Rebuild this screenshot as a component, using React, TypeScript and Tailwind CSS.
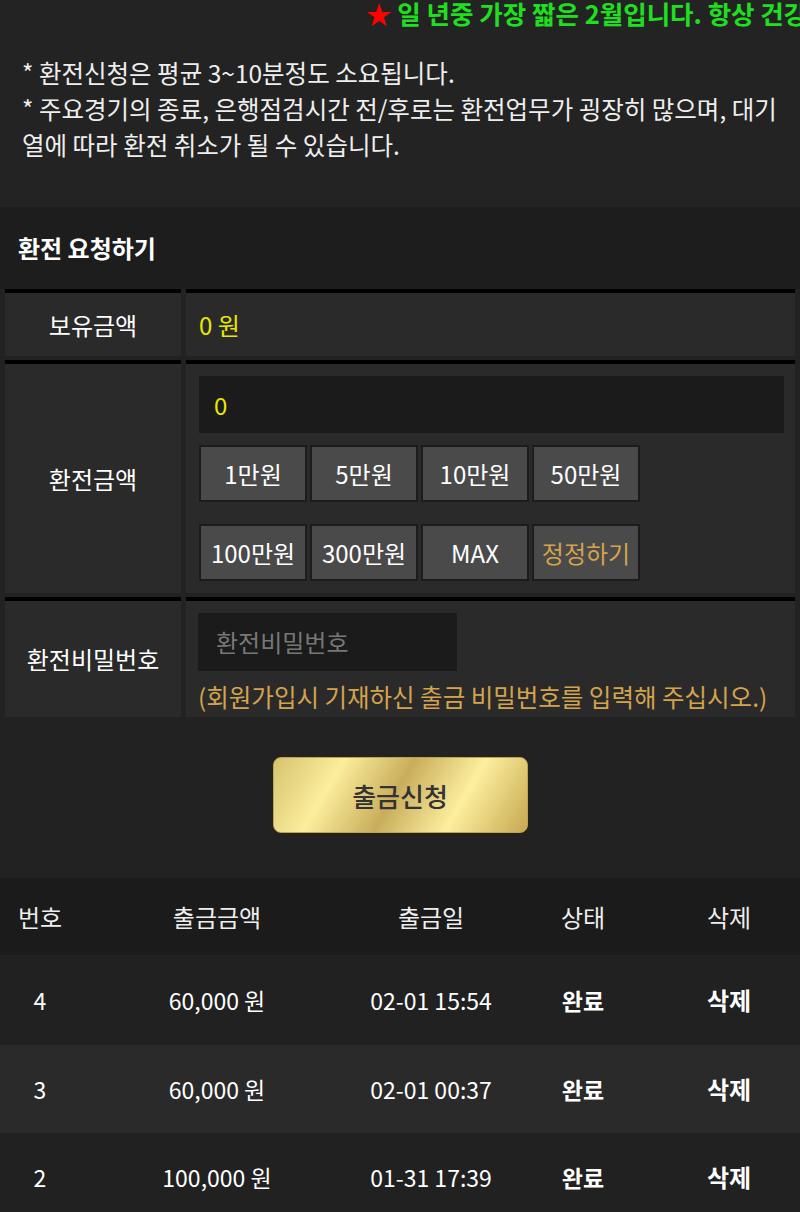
import React from 'react';

const amounts1 = ['1만원', '5만원', '10만원', '50만원'];
const amounts2 = ['100만원', '300만원', 'MAX'];

const history = [
  { no: 4, amount: '60,000 원', date: '02-01 15:54', bg: 'bg-[#212121]', h: 'h-[90px]' },
  { no: 3, amount: '60,000 원', date: '02-01 00:37', bg: 'bg-[#2a2a2a]', h: 'h-[88px]' },
  { no: 2, amount: '100,000 원', date: '01-31 17:39', bg: 'bg-[#212121]', h: 'h-[88px]' },
];

const AmountButton: React.FC<{ label: string; gold?: boolean }> = ({ label, gold }) => (
  <button
    className={`w-[108px] h-[57px] bg-[#4a4a4a] border-2 border-[#1c1c1c] text-[24px] ${
      gold ? 'text-[#d3a34d]' : 'text-white'
    }`}
  >
    {label}
  </button>
);

export default function App() {
  return (
    <div className="w-[800px] h-[1212px] overflow-hidden bg-[#222222] text-white font-['Noto_Sans_CJK_KR','Noto_Sans',sans-serif] text-[24px]">
      {/* notice */}
      <div className="bg-[#232323]">
        <div className="h-[28px] overflow-hidden whitespace-nowrap pl-[366px] text-[25.5px] leading-[26px] font-bold text-[#1fe01f]">
          <span className="text-[#ff0000]">★</span> 일 년중 가장 짧은 2월입니다. 항상 건강 조심하세요.
        </div>
        <div className="px-[22px] pt-[27px] pb-[44px] text-[24.5px] leading-[36px] text-[#eeeeee]">
          <p>* 환전신청은 평균 3~10분정도 소요됩니다.</p>
          <p className="whitespace-nowrap">
            * 주요경기의 종료, 은행점검시간 전/후로는 환전업무가 굉장히 많으며, 대기
            <br />
            열에 따라 환전 취소가 될 수 있습니다.
          </p>
        </div>
      </div>

      <div className="h-[82px] bg-[#1d1d1d] flex items-center pl-[18px] font-bold">환전 요청하기</div>

      {/* form */}
      <div className="flex flex-col gap-[4px] px-[5px]">
        <div className="flex gap-[5px] h-[67px]">
          <div className="w-[176px] border-t-4 border-black bg-[#2a2a2a] flex items-center justify-center">보유금액</div>
          <div className="flex-1 border-t-4 border-black bg-[#2a2a2a] flex items-center pl-[13px] text-[#e8e800]">0 원</div>
        </div>

        <div className="flex gap-[5px] h-[233px]">
          <div className="w-[176px] border-t-4 border-black bg-[#2a2a2a] flex items-center justify-center">환전금액</div>
          <div className="flex-1 border-t-4 border-black bg-[#2a2a2a] pt-[12px] pl-[13px] pr-[11px]">
            <div className="h-[57px] bg-[#1b1b1b] flex items-center pl-[15px] text-[#e8e800]">0</div>
            <div className="flex gap-[3px] mt-[12px]">
              {amounts1.map((a) => (
                <AmountButton key={a} label={a} />
              ))}
            </div>
            <div className="flex gap-[3px] mt-[22px]">
              {amounts2.map((a) => (
                <AmountButton key={a} label={a} />
              ))}
              <AmountButton label="정정하기" gold />
            </div>
          </div>
        </div>

        <div className="flex gap-[5px] h-[120px]">
          <div className="w-[176px] border-t-4 border-black bg-[#2a2a2a] flex items-center justify-center">환전비밀번호</div>
          <div className="flex-1 border-t-4 border-black bg-[#2a2a2a] pt-[12px] pl-[12px]">
            <div className="w-[259px] h-[58px] bg-[#1b1b1b] flex items-center pl-[18px] text-[#777777]">환전비밀번호</div>
            <div className="mt-[11px] leading-[30px] text-[24.5px] text-[#d3a34d] whitespace-nowrap">
              (회원가입시 기재하신 출금 비밀번호를 입력해 주십시오.)
            </div>
          </div>
        </div>
      </div>

      <div className="flex justify-center pt-[40px]">
        <button className="w-[255px] h-[76px] rounded-[8px] border border-[#bfa550] text-[26px] font-medium text-[#333333] bg-[linear-gradient(120deg,#d6c36e_0%,#fbee9d_24%,#c9ad5c_48%,#fcef9f_72%,#c7a850_100%)]">
          출금신청
        </button>
      </div>

      {/* history */}
      <div className="mt-[45px]">
        <div className="grid grid-cols-[80px_274px_154px_150px_142px] h-[77px] items-center bg-[#1b1b1b] text-[#eeeeee] text-center">
          <div>번호</div>
          <div>출금금액</div>
          <div>출금일</div>
          <div>상태</div>
          <div>삭제</div>
        </div>
        {history.map((r) => (
          <div
            key={r.no}
            className={`grid grid-cols-[80px_274px_154px_150px_142px] ${r.h} items-center ${r.bg} text-center text-[23px]`}
          >
            <div>{r.no}</div>
            <div>{r.amount}</div>
            <div>{r.date}</div>
            <div className="font-bold">완료</div>
            <div className="font-bold text-[24px]">삭제</div>
          </div>
        ))}
      </div>
    </div>
  );
}
